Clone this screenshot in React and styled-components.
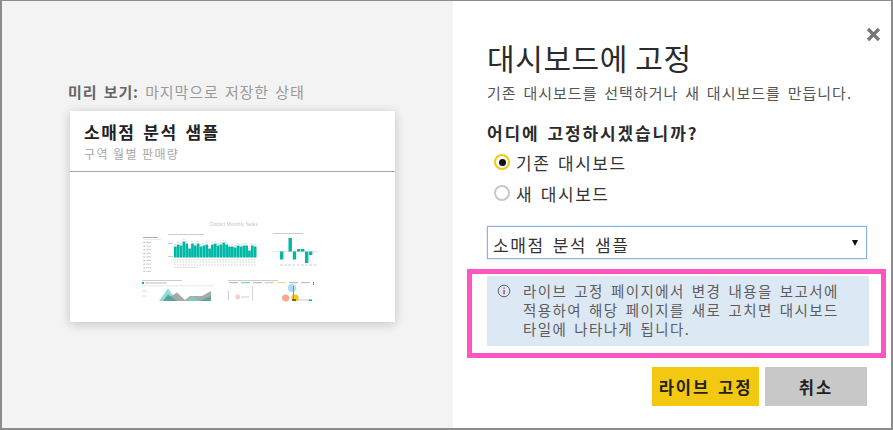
import React from "react";
import styled, { createGlobalStyle } from "styled-components";

const FONT = `"Noto Sans CJK KR", "Noto Sans", sans-serif`;

const Global = createGlobalStyle`
  html, body { margin: 0; padding: 0; background: #fff; }
  body { font-family: ${FONT}; }
`;

const Dialog = styled.div`
  width: 893px; height: 430px; box-sizing: border-box;
  border: 1px solid #8c8c8c; border-width: 1px 2px 2px 2px;
  display: grid; grid-template-columns: 451px 1fr; overflow: hidden;
`;
const PreviewPane = styled.section`
  background: #f3f3f3; padding: 81px 0 0 66px; box-sizing: border-box;
`;
const PreviewLabel = styled.div`
  font-size: 15px; line-height: 20px; letter-spacing: 0.9px; word-spacing: 2px; color: #9a9a9a; margin-bottom: 9px;
  b { font-weight: 700; color: #666; }
`;
const Card = styled.article`
  width: 325px; height: 211px; margin-left: 2px; background: #fff;
  box-shadow: 0 2px 10px rgba(0,0,0,.2);
`;
const CardHead = styled.header`
  height: 61px; box-sizing: border-box; padding: 9px 0 0 14px; border-bottom: 1px solid #a6a6a6;
`;
const CardTitle = styled.div`
  font-size: 17px; line-height: 24px; font-weight: 700; letter-spacing: 1.5px; word-spacing: 2.5px; color: #222;
`;
const CardSub = styled.div`
  font-size: 12px; line-height: 17px; letter-spacing: 1.4px; color: #a8a8a8; margin-top: 1px;
`;
const Thumb = styled.svg`
  display: block; width: 325px; height: 149px; filter: blur(0.4px);
`;
const FormPane = styled.section`
  position: relative; padding: 33px 0 0 34px; box-sizing: border-box; background: #fff;
`;
const Close = styled.svg`
  position: absolute; left: 413px; top: 26px; width: 15px; height: 15px;
`;
const Title = styled.h1`
  margin: 0; font-size: 30px; line-height: 46px; font-weight: 400; letter-spacing: 0.6px; color: #2b2b2b;
`;
const Lead = styled.p`
  margin: 3px 0 0; font-size: 15px; line-height: 20px; letter-spacing: 1px; word-spacing: 2.5px; color: #555; white-space: nowrap;
`;
const Question = styled.h2`
  margin: 18px 0 0; font-size: 17px; line-height: 23px; font-weight: 700; letter-spacing: 1.9px; word-spacing: 2px; color: #2b2b2b;
`;
const RadioGroup = styled.div`
  display: flex; flex-direction: column; gap: 7px; margin: 6px 0 0 7px;
`;
const RadioRow = styled.label`
  display: flex; align-items: center; gap: 6px; height: 24px;
  font-size: 17px; letter-spacing: 1.6px; word-spacing: 2px; color: #333;
`;
const RadioDot = styled.span`
  width: 16px; height: 16px; border-radius: 50%; box-sizing: border-box; flex: none;
  border: 2px solid ${p => (p.$on ? "#f2c811" : "#c8c8c8")};
  display: flex; align-items: center; justify-content: center;
  &::after {
    content: ""; width: 7px; height: 7px; border-radius: 50%;
    background: ${p => (p.$on ? "#111" : "transparent")};
  }
`;
const Select = styled.div`
  width: 380px; height: 33px; box-sizing: border-box; margin-top: 21px;
  border: 1px solid #8fb2e4; box-shadow: 0 0 1px #7ba4dd;
  display: flex; align-items: center; justify-content: space-between; padding: 0 7px 0 5px;
`;
const SelectValue = styled.span`
  font-size: 17px; letter-spacing: 1.6px; word-spacing: 2.5px; color: #333; margin-top: 4px;
`;
const Caret = styled.span`
  width: 0; height: 0; border: 3.5px solid transparent; border-top: 6px solid #111; border-bottom: 0; margin-right: 1px;
`;
const Highlight = styled.div`
  position: absolute; left: 14px; top: 268px; width: 419px; height: 89px; box-sizing: border-box;
  border: 5px solid #ff55c0; pointer-events: none;
`;
const Notice = styled.div`
  width: 382px; height: 70px; box-sizing: border-box; margin-top: 17px; background: #dce8f4;
  display: flex; padding: 5px 0 0 10px; gap: 12px;
`;
const InfoIcon = styled.svg`
  width: 14px; height: 14px; flex: none; margin-top: 3px;
`;
const NoticeText = styled.div`
  font-size: 14.5px; line-height: 19px; letter-spacing: 1.4px; word-spacing: 2.5px; color: #5c5c5c; white-space: pre;
`;
const Actions = styled.div`
  display: flex; gap: 6px; margin: 21px 0 0 165px;
`;
const Button = styled.button`
  width: ${p => p.$w}px; height: 39px; border: 0; padding: 0; font-family: ${FONT};
  font-size: 16.5px; font-weight: 700; letter-spacing: 2px; word-spacing: 2px; color: #222; background: ${p => p.$bg};
`;

const heights = [11,13,12,16,14,9,14,12,14,11,12,13,9,13,14,12,13,15,13,11,11,10,12,11,12,12,7,12,11];

function Thumbnail() {
  return (
    <Thumb viewBox="70 173 325 149" aria-hidden="true">
      <text x="234" y="227" fontSize="5" fill="#c4c4c4" fontFamily="Liberation Sans" textAnchor="middle">District Monthly Sales</text>
      {/* slicer */}
      <rect x="143" y="238" width="15" height="1" fill="#c4a0b8" />
      <rect x="143" y="240" width="18" height="0.6" fill="#ddd" />
      {[0,1,2,3,4,5,6,7,8].map(i => (
        <g key={i}>
          <rect x="143.5" y={243 + i * 3.6} width="1.2" height="1.2" fill="#aaa" />
          <rect x="146" y={243 + i * 3.6} width="5" height="1" fill="#ccc" />
        </g>
      ))}
      {/* column chart */}
      <rect x="168" y="235" width="36" height="1" fill="#ccc" />
      <rect x="168" y="244" width="5" height="1" fill="#ccc" />
      <rect x="168" y="257" width="5" height="1" fill="#ccc" />
      {heights.map((h, i) => (
        <g key={i}>
          <rect x={174 + i * 2.85} y={258.5 - h} width="2.7" height={h} fill="#00b8a6" />
          <rect x={174 + i * 2.85} y={256 - h} width="2.2" height="1" fill="#ddd" />
        </g>
      ))}
      {[0,1,2].map(r => heights.map((_, i) => (
        <rect key={`${r}-${i}`} x={174 + i * 2.85} y={260 + r * 2.6} width="1.7" height="1.4" fill="#e2e2e2" />
      )))}
      <rect x="174" y="268" width="24" height="0.8" fill="#ddd" />
      {/* variance chart */}
      <rect x="273" y="234" width="30" height="1" fill="#ccc" />
      <rect x="273" y="252" width="45" height="0.7" fill="#ddd" />
      {[["280",252.5,8],["288.5",239,13.5],["292.8",252.5,8],["297",250,2.5],["301",250,2.5],["305",252.5,11.5],["309",252.5,3.5]].map(([x,y,h]) => (
        <rect key={x} x={x} y={y} width="3.4" height={h} fill="#00b8a6" />
      ))}
      {[0,1,2,3,4,5,6,7,8].map(i => (
        <rect key={i} x={280 + i * 4.2} y="265.5" width="2.6" height="1" fill="#ccc" />
      ))}
      {/* area chart */}
      <rect x="142" y="281" width="40" height="1" fill="#ccc" />
      <rect x="142" y="283" width="2" height="2" fill="#00b8a6" />
      <rect x="145" y="283.5" width="22" height="1" fill="#bbb" />
      <rect x="142" y="286.5" width="72" height="0.7" fill="#ddd" />
      <rect x="142" y="291.5" width="5" height="1" fill="#ddd" />
      <rect x="142" y="296.5" width="5" height="1" fill="#ddd" />
      <polygon points="159,302 168,289.5 177,302" fill="#8fded4" />
      <polygon points="163,302 177,293.5 185,301 190,297 202,297 211,292 211,302" fill="#a5aaaa" />
      <polygon points="163,302 168,295.5 177,302" fill="#5f9f99" />
      <polygon points="186,302 192,297 200,302" fill="#7fc9bf" />
      <polygon points="200,302 211,297 211,302" fill="#64a39d" />
      {/* bubble chart */}
      <rect x="228" y="281" width="50" height="1" fill="#ccc" />
      {[0,1,2,3,4,5,6].map(i => (
        <rect key={i} x={229 + i * 12} y="283" width="9" height="1.2" fill={["#bbb","#7cc","#bbb","#f0c0b0","#f2dc90","#bbb","#bbd"][i]} />
      ))}
      <rect x="252" y="287" width="0.8" height="15" fill="#ccc" />
      <rect x="228" y="292" width="1" height="9" fill="#ccc" />
      <circle cx="237.7" cy="298" r="2.4" fill="#f0cfc6" />
      <rect x="241" y="297.5" width="8" height="1" fill="#ccc" />
      <circle cx="292" cy="289" r="4" fill="#a9dcf2" />
      <circle cx="285.7" cy="299" r="3.6" fill="#f7a98a" />
      <circle cx="295" cy="299" r="3.6" fill="#f2c811" />
      <rect x="293" y="287" width="0.9" height="15" fill="#888" />
      <rect x="292" y="300" width="4" height="2" fill="#666" />
      <rect x="298" y="300.5" width="12" height="0.8" fill="#bbb" />
      <rect x="309" y="300.5" width="3" height="1.5" fill="#00b8a6" />
      <rect x="313" y="283" width="1" height="3" fill="#888" />
    </Thumb>
  );
}

export default function App() {
  return (
    <>
      <Global />
      <Dialog>
        <PreviewPane>
          <PreviewLabel><b>미리 보기:</b> 마지막으로 저장한 상태</PreviewLabel>
          <Card>
            <CardHead>
              <CardTitle>소매점 분석 샘플</CardTitle>
              <CardSub>구역 월별 판매량</CardSub>
            </CardHead>
            <Thumbnail />
          </Card>
        </PreviewPane>
        <FormPane>
          <Close viewBox="0 0 15 15" aria-label="닫기">
            <path d="M2 2 L13 13 M13 2 L2 13" stroke="#777" strokeWidth="3.2" />
          </Close>
          <Title>대시보드에 고정</Title>
          <Lead>기존 대시보드를 선택하거나 새 대시보드를 만듭니다.</Lead>
          <Question>어디에 고정하시겠습니까?</Question>
          <RadioGroup>
            <RadioRow><RadioDot $on />기존 대시보드</RadioRow>
            <RadioRow><RadioDot />새 대시보드</RadioRow>
          </RadioGroup>
          <Select><SelectValue>소매점 분석 샘플</SelectValue><Caret /></Select>
          <Notice>
            <InfoIcon viewBox="0 0 14 14" aria-hidden="true">
              <circle cx="7" cy="7" r="5.8" fill="none" stroke="#6b5a7a" strokeWidth="1" />
              <rect x="6.5" y="3.5" width="1.1" height="1.2" fill="#8a1f8a" />
              <rect x="6.5" y="5.8" width="1.1" height="4.6" fill="#8a1f8a" />
            </InfoIcon>
            <NoticeText>{"라이브 고정 페이지에서 변경 내용을 보고서에\n적용하여 해당 페이지를 새로 고치면 대시보드\n타일에 나타나게 됩니다."}</NoticeText>
          </Notice>
          <Actions>
            <Button $w={107} $bg="#f2c811">라이브 고정</Button>
            <Button $w={102} $bg="#c8c8c8">취소</Button>
          </Actions>
          <Highlight />
        </FormPane>
      </Dialog>
    </>
  );
}
